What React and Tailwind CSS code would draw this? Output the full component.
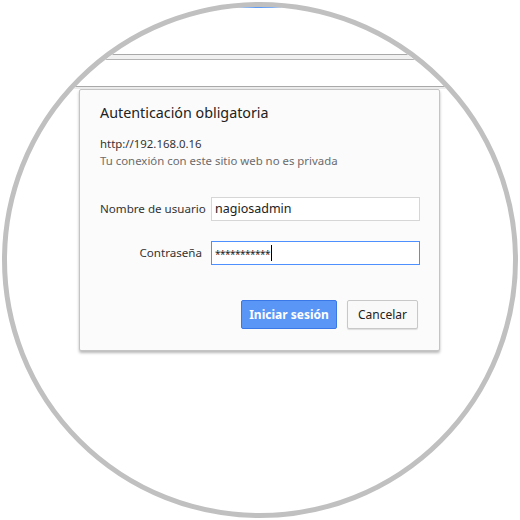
import React from "react";

const Field = ({ label, children }) => (
  <>
    <label className="text-right whitespace-nowrap text-[11.6px] text-[#333] self-center">{label}</label>
    {children}
  </>
);

const App = () => {
  return (
    <div
      className="w-[520px] h-[520px] bg-white pt-[2px]"
      style={{ fontFamily: '"Noto Sans", "Open Sans", sans-serif' }}
    >
      <div className="mx-auto w-[516px] h-[516px] rounded-full border-[5px] border-[#c0c0c0] overflow-hidden bg-white">
        <div className="h-px bg-[#5b9bf5]" />
        <div className="h-[46px]" />
        <div className="h-px bg-[#a9a9a9]" />
        <div className="h-[4px] bg-[#f1f1f1]" />
        <div className="h-px bg-[#b4b4b4]" />
        <div className="h-[26px]" />
        <div className="h-px bg-[#a9a9a9]" />
        <div className="h-[2px] bg-[#ececec]" />

        <div className="pl-[72px]">
          <div className="w-[361px] bg-[#fbfbfb] border border-[#c4c4c4] rounded-[2px] shadow-[0_2px_3px_rgba(0,0,0,0.28)] pl-[20px] pr-[19px] pt-[13px] pb-[21px]">
            <h1 className="text-[14.3px] leading-[20px] text-[#222]">Autenticación obligatoria</h1>
            <p className="mt-[12px] text-[11.4px] leading-[17px] text-[#333]">http://192.168.0.16</p>
            <p className="text-[11.4px] leading-[17px] text-[#6b6b6b]">
              Tu conexión con este sitio web no es privada
            </p>

            <div className="mt-[28px] grid grid-cols-[102px_209px] gap-x-[9px] gap-y-[20px]">
              <Field label="Nombre de usuario">
                <div className="h-[24px] bg-white border border-[#d6d6d6] pl-[3px] flex items-center text-[12.5px] text-[#222]">
                  nagiosadmin
                </div>
              </Field>
              <Field label="Contraseña">
                <div className="h-[24px] bg-white border border-[#4d90fe] pl-[3px] flex items-center text-[10px] text-[#222]">
                  <span className="tracking-[-0.5px] pt-[2px]">***********</span>
                  <span className="ml-px w-px h-[16px] bg-black" />
                </div>
              </Field>
            </div>

            <div className="mt-[35px] mr-[2px] flex justify-end gap-[10px]">
              <button className="w-[96px] h-[29px] rounded-[2px] bg-[#5a96f6] border border-[#3b78e7] text-white text-[12px] font-bold">
                Iniciar sesión
              </button>
              <button className="w-[71px] h-[29px] rounded-[2px] bg-[#f9f9f9] border border-[#c8c8c8] shadow-[0_1px_1px_rgba(0,0,0,0.12)] text-[#222] text-[12px]">
                Cancelar
              </button>
            </div>
          </div>
        </div>
      </div>
    </div>
  );
};

export default App;
